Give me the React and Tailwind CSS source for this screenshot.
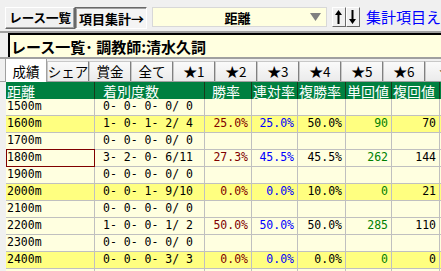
const JP = { fontFamily: '"Noto Sans CJK JP", "Liberation Sans", sans-serif' };

const COLS = [
  { key: 'dist', w: 'w-[89px]', head: '距離', hp: 'pl-[1px]' },
  { key: 'rec', w: 'w-[110px]', head: '着別度数', hp: 'pl-[8px]' },
  { key: 'win', w: 'w-[47px]', head: '勝率', hp: 'pl-[7px]' },
  { key: 'ren', w: 'w-[46px]', head: '連対率', hp: 'pl-[1px]' },
  { key: 'fuku', w: 'w-[48px]', head: '複勝率', hp: 'pl-[1px]' },
  { key: 'tan', w: 'w-[46px]', head: '単回値', hp: 'pl-[1px]' },
  { key: 'fkv', w: 'w-[48px]', head: '複回値', hp: 'pl-[1px]' },
];

const ROWS = [
  { dist: '1500m', rec: '0- 0- 0- 0/ 0' },
  { dist: '1600m', rec: '1- 0- 1- 2/ 4', win: '25.0%', ren: '25.0%', fuku: '50.0%', tan: '90', fkv: '70', hi: true },
  { dist: '1700m', rec: '0- 0- 0- 0/ 0' },
  { dist: '1800m', rec: '3- 2- 0- 6/11', win: '27.3%', ren: '45.5%', fuku: '45.5%', tan: '262', fkv: '144', sel: true },
  { dist: '1900m', rec: '0- 0- 0- 0/ 0' },
  { dist: '2000m', rec: '0- 0- 1- 9/10', win: '0.0%', ren: '0.0%', fuku: '10.0%', tan: '0', fkv: '21', hi: true },
  { dist: '2100m', rec: '0- 0- 0- 0/ 0' },
  { dist: '2200m', rec: '1- 0- 0- 1/ 2', win: '50.0%', ren: '50.0%', fuku: '50.0%', tan: '285', fkv: '110' },
  { dist: '2300m', rec: '0- 0- 0- 0/ 0' },
  { dist: '2400m', rec: '0- 0- 0- 3/ 3', win: '0.0%', ren: '0.0%', fuku: '0.0%', tan: '0', fkv: '0', hi: true },
  { dist: '2500m', rec: '0- 0- 0- 0/ 0' },
];

const TABS = ['成績', 'シェア', '賞金', '全て', '★1', '★2', '★3', '★4', '★5', '★6', '★7'];

const VAL_COLOR = {
  win: 'text-[#800000]',
  ren: 'text-[#0000ff]',
  fuku: 'text-black',
  tan: 'text-[#008000]',
  fkv: 'text-black',
};

function Cell({ col, row }) {
  const v = row[col.key] || '';
  if (col.key === 'dist') {
    return (
      <div className={`${col.w} shrink-0 h-full border-r border-[#c0c0c0] relative pl-[1px] flex items-center`}>
        {row.sel && <div className="absolute -top-px left-0 right-[-1px] bottom-[-1px] border border-[#800000]" />}
        {v}
      </div>
    );
  }
  if (col.key === 'rec') {
    return <div className={`${col.w} shrink-0 h-full border-r border-[#c0c0c0] pl-[8px] flex items-center whitespace-pre`}>{v}</div>;
  }
  return (
    <div className={`${col.w} shrink-0 h-full border-r border-[#c0c0c0] pr-[3px] flex items-center justify-end ${VAL_COLOR[col.key]}`}>
      {v}
    </div>
  );
}

export default function App() {
  return (
    <div className="w-[441px] h-[271px] overflow-hidden bg-[#f0f0f0] text-black" style={JP}>
      {/* top toolbar */}
      <div className="h-[31px] flex items-start pt-[7px] pl-[5px] whitespace-nowrap">
        <div className="w-[75px] h-[22px] bg-[#f0f0f0] border border-t-white border-l-white border-r-[#696969] border-b-[#696969] shadow-[inset_-1px_-1px_0_#a0a0a0] flex items-center justify-center text-[12.5px] font-bold leading-none">
          レース一覧
        </div>
        <div className="w-[77px] h-[22px] bg-[#f4f4f4] border border-t-[#696969] border-l-[#696969] border-r-white border-b-white shadow-[inset_1px_1px_0_#a0a0a0] flex items-center justify-center text-[13px] font-bold leading-none">
          項目集計→
        </div>
        <div className="ml-[5px] w-[186px] h-[20px] bg-[#ffffe0] border border-[#d8d8d8] relative flex items-center justify-center text-[13px] font-bold leading-none">
          <span className="ml-[-4px]">距離</span>
          <svg className="absolute right-[5px] top-[5px]" width="11" height="8" viewBox="0 0 11 8">
            <path d="M0 0 H11 L5.5 8 Z" fill="#808080" />
          </svg>
        </div>
        <div className="ml-[5px] w-[15px] h-[20px] border border-t-white border-l-white border-r-[#696969] border-b-[#696969] flex items-center justify-center">
          <svg width="7" height="14" viewBox="0 0 7 14"><path d="M3.5 0 L7 5 H4.5 V14 H2.5 V5 H0 Z" fill="#000" /></svg>
        </div>
        <div className="w-[15px] h-[20px] border border-t-white border-l-white border-r-[#696969] border-b-[#696969] flex items-center justify-center">
          <svg width="7" height="14" viewBox="0 0 7 14"><path d="M3.5 14 L7 9 H4.5 V0 H2.5 V9 H0 Z" fill="#000" /></svg>
        </div>
        <div className="ml-[6px] mt-[1px] text-[15px] leading-[18px] text-[#0000ff]">集計項目え</div>
      </div>

      {/* title bar */}
      <div className="h-[28px] border-t-2 border-b-2 border-[#a0a0a0] pl-[8px]">
        <div className="h-full bg-[#ffffe0] border-l-2 border-t-2 border-black flex items-center pl-[1px] text-[15px] font-bold leading-none whitespace-nowrap">
          レース一覧･ 調教師:清水久詞
        </div>
      </div>

      {/* tabs */}
      <div className="h-[22px] flex items-end pl-[5px] whitespace-nowrap text-[13.5px] leading-none">
        {TABS.map((t, i) => (
          <div
            key={t}
            className={
              i === 0
                ? 'w-[42px] h-[24px] -mb-px z-10 bg-white border border-b-0 border-[#a0a0a0] flex items-center justify-center pt-[2px] shrink-0'
                : 'w-[42px] h-[20px] bg-gradient-to-b from-[#fafafa] to-[#ebebeb] border border-b-0 border-l-[#c8c8c8] border-t-[#c8c8c8] border-r-[#808080] flex items-center justify-center shrink-0'
            }
          >
            {t === '★7' ? '★' : t}
          </div>
        ))}
      </div>

      {/* grid */}
      <div className="pl-[6px] border-t border-[#a0a0a0]">
        <div className="bg-[#008040] text-white h-[17px] flex text-[14px] leading-none whitespace-nowrap">
          {COLS.map((c) => (
            <div key={c.key} className={`${c.w} shrink-0 h-full border-r border-[#1a3a1a] flex items-center ${c.hp}`}>
              {c.head}
            </div>
          ))}
          <div className="pl-[2px] flex items-center">複</div>
        </div>
        <div className="text-[11.5px] leading-none" style={{ fontFamily: '"DejaVu Sans Mono", "Liberation Mono", monospace' }}>
          {ROWS.map((r) => (
            <div key={r.dist} className={`h-[17px] flex border-b border-[#c0c0c0] ${r.hi ? 'bg-[#ffff80]' : 'bg-[#ffffe0]'}`}>
              {COLS.map((c) => (
                <Cell key={c.key} col={c} row={r} />
              ))}
              <div className="flex-1" />
            </div>
          ))}
        </div>
      </div>
    </div>
  );
}
